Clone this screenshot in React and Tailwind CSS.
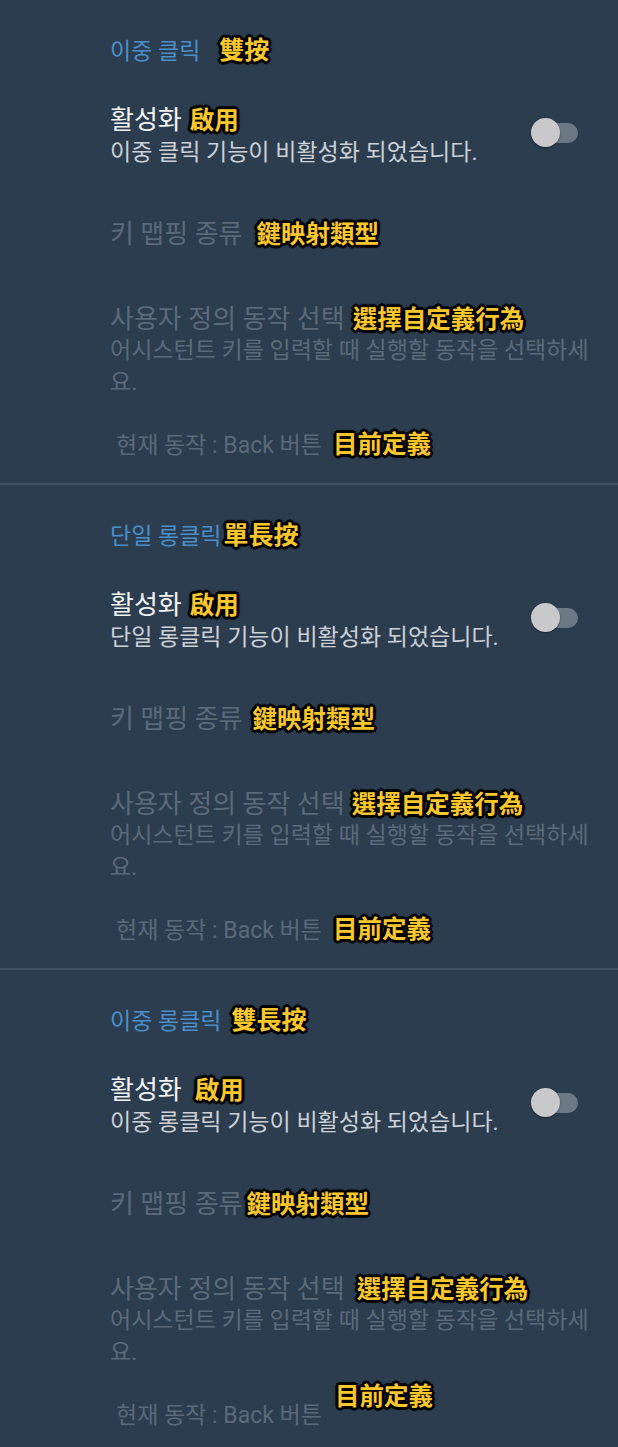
const note =
  "font-bold text-[#f9c72c] [font-family:'Noto_Sans_CJK_TC','Noto_Sans_CJK_KR',sans-serif] [text-shadow:-2px_-2px_0_#000,2px_-2px_0_#000,-2px_2px_0_#000,2px_2px_0_#000,0_2px_0_#000,0_-2px_0_#000,2px_0_0_#000,-2px_0_0_#000,0_3px_1px_#000,3px_0_1px_#000,-3px_0_1px_#000,0_-3px_1px_#000]";

const Toggle = () => (
  <div className="relative w-[47px] h-[29px] shrink-0 mr-[22px] mb-[8px]">
    <div className="absolute right-0 top-[5px] w-[36px] h-[20px] rounded-full bg-[#6c7886]" />
    <div className="absolute left-0 top-0 w-[29px] h-[29px] rounded-full bg-[#c9c9cb] shadow-[0_1px_2px_rgba(0,0,0,0.4)]" />
  </div>
);

const sections = [
  {
    title: '이중 클릭',
    titleNote: '雙按',
    titleGap: 'ml-[19px]',
    activeGap: 'ml-[8px]',
    desc: '이중 클릭 기능이 비활성화 되었습니다.',
    keyGap: 'ml-[14px]',
    customGap: 'ml-[8px]',
    currentGap: 'ml-[11px]',
    raised: false,
  },
  {
    title: '단일 롱클릭',
    titleNote: '單長按',
    titleGap: 'ml-[2px]',
    activeGap: 'ml-[8px]',
    desc: '단일 롱클릭 기능이 비활성화 되었습니다.',
    keyGap: 'ml-[10px]',
    customGap: 'ml-[7px]',
    currentGap: 'ml-[11px]',
    raised: false,
  },
  {
    title: '이중 롱클릭',
    titleNote: '雙長按',
    titleGap: 'ml-[10px]',
    activeGap: 'ml-[13px]',
    desc: '이중 롱클릭 기능이 비활성화 되었습니다.',
    keyGap: 'ml-[4px]',
    customGap: 'ml-[12px]',
    currentGap: 'ml-[13px]',
    raised: true,
  },
];

const Section = ({ s, last }) => (
  <div className={last ? 'pb-[20px]' : 'border-b-2 border-[#3e5064]'}>
    <div className="pl-[110px] pr-[18px] pt-[32px]">
      <div className="h-[32px] leading-[32px] text-[23px] text-[#4a8fc9]">
        {s.title}
        <span className={`${note} text-[25px] ${s.titleGap}`}>{s.titleNote}</span>
      </div>

      <div className="mt-[38px] flex items-center">
        <div className="flex-1">
          <div className="h-[34px] leading-[34px] text-[26px] text-[#f2f3f4]">
            활성화
            <span className={`${note} text-[24.5px] ${s.activeGap}`}>啟用</span>
          </div>
          <div className="h-[34px] leading-[34px] text-[23px] text-[#cdd1d6]">{s.desc}</div>
        </div>
        <Toggle />
      </div>

      <div className="mt-[46px] h-[34px] leading-[34px] text-[26px] text-[#5b6a7a]">
        키 맵핑 종류
        <span className={`${note} text-[24.5px] ${s.keyGap}`}>鍵映射類型</span>
      </div>

      <div className="mt-[51px] h-[34px] leading-[34px] text-[26px] text-[#5b6a7a]">
        사용자 정의 동작 선택
        <span className={`${note} text-[24.5px] ${s.customGap}`}>選擇自定義行為</span>
      </div>
      <div className="leading-[32px] text-[23px] text-[#5b6a7a]">
        어시스턴트 키를 입력할 때 실행할 동작을 선택하세요.
      </div>

      <div className="mt-[27px] mb-[23px] pl-[6px] h-[34px] leading-[34px] text-[23px] text-[#5b6a7a]">
        현재 동작 : Back 버튼
        <span className={`${note} text-[24.5px] ${s.currentGap} ${s.raised ? 'relative -top-[18px]' : ''}`}>目前定義</span>
      </div>
    </div>
  </div>
);

export default function App() {
  return (
    <div className="min-h-[1447px] w-[618px] bg-[#2c3d50] [font-family:'Roboto','Noto_Sans_CJK_KR',sans-serif] overflow-hidden">
      {sections.map((s, i) => (
        <Section key={s.title} s={s} last={i === 2} />
      ))}
    </div>
  );
}
